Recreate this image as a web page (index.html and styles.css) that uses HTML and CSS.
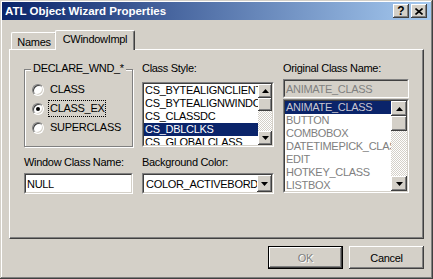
FILE: index.html
```html
<!DOCTYPE html>
<html lang="en">

<head>
   <meta charset="UTF-8">
   <title>ATL Object Wizard Properties</title>
   <link rel="stylesheet" href="styles.css">
</head>

<body>
   <div class="window">
      <div class="titlebar">
         <span class="title">ATL Object Wizard Properties</span>
         <div class="caption-buttons">
            <span class="cap-btn help">?</span>
            <span class="cap-btn">
               <svg width="8" height="7" viewBox="0 0 8 7"><path d="M0.5 0.5 L7.5 6.5 M7.5 0.5 L0.5 6.5" stroke="#000" stroke-width="1.6" fill="none"/></svg>
            </span>
         </div>
      </div>

      <div class="client">
         <div class="tabs">
            <div class="tab names">Names</div>
            <div class="tab active">CWindowImpl</div>
         </div>

         <div class="panel">
            <div class="grid">
               <!-- DECLARE_WND_* -->
               <div class="group">
                  <span class="group-label">DECLARE_WND_*</span>
                  <div class="radio-row">
                     <span class="radio"></span>
                     <span class="radio-text">CLASS</span>
                  </div>
                  <div class="radio-row">
                     <span class="radio checked"></span>
                     <span class="radio-text focus">CLASS_EX</span>
                  </div>
                  <div class="radio-row">
                     <span class="radio"></span>
                     <span class="radio-text">SUPERCLASS</span>
                  </div>
               </div>

               <!-- Class Style -->
               <div class="field">
                  <label class="lbl lbl-list">Class Style:</label>
                  <div class="listbox style-list">
                     <div class="listbox-inner">
                        <div class="items">
                           <div class="item">CS_BYTEALIGNCLIENT</div>
                           <div class="item">CS_BYTEALIGNWINDOW</div>
                           <div class="item">CS_CLASSDC</div>
                           <div class="item selected">CS_DBLCLKS</div>
                           <div class="item">CS_GLOBALCLASS</div>
                        </div>
                        <div class="scrollbar small">
                           <span class="sb-btn"><svg width="7" height="4" viewBox="0 0 7 4"><polygon points="0,4 3.5,0 7,4" fill="#000"/></svg></span>
                           <span class="thumb"></span>
                           <span class="sb-track"></span>
                           <span class="sb-btn"><svg width="7" height="4" viewBox="0 0 7 4"><polygon points="0,0 7,0 3.5,4" fill="#000"/></svg></span>
                        </div>
                     </div>
                  </div>
               </div>

               <!-- Original Class Name -->
               <div class="field original">
                  <label class="lbl">Original Class Name:</label>
                  <div class="edit disabled">
                     <div class="edit-inner">ANIMATE_CLASS</div>
                  </div>
                  <div class="listbox orig-list">
                     <div class="listbox-inner">
                        <div class="items grey">
                           <div class="item selected">ANIMATE_CLASS</div>
                           <div class="item">BUTTON</div>
                           <div class="item">COMBOBOX</div>
                           <div class="item">DATETIMEPICK_CLASS</div>
                           <div class="item">EDIT</div>
                           <div class="item">HOTKEY_CLASS</div>
                           <div class="item">LISTBOX</div>
                        </div>
                        <div class="scrollbar">
                           <span class="sb-btn"><svg width="7" height="4" viewBox="0 0 7 4"><polygon points="0,4 3.5,0 7,4" fill="#000"/></svg></span>
                           <span class="thumb"></span>
                           <span class="sb-track"></span>
                           <span class="sb-btn"><svg width="7" height="4" viewBox="0 0 7 4"><polygon points="0,0 7,0 3.5,4" fill="#000"/></svg></span>
                        </div>
                     </div>
                  </div>
               </div>

               <!-- Window Class Name -->
               <div class="field">
                  <label class="lbl">Window Class Name:</label>
                  <div class="edit">
                     <div class="edit-inner">NULL</div>
                  </div>
               </div>

               <!-- Background Color -->
               <div class="field">
                  <label class="lbl">Background Color:</label>
                  <div class="edit combo">
                     <div class="edit-inner">
                        <span class="combo-text">COLOR_ACTIVEBORDER</span>
                        <span class="combo-btn"><svg width="7" height="4" viewBox="0 0 7 4"><polygon points="0,0 7,0 3.5,4" fill="#000"/></svg></span>
                     </div>
                  </div>
               </div>
            </div>
         </div>

         <div class="actions">
            <button class="btn default" disabled>OK</button>
            <button class="btn">Cancel</button>
         </div>
      </div>
   </div>
</body>

</html>
```

FILE: styles.css
```css
* {
   box-sizing: border-box;
}

html,
body {
   margin: 0;
   padding: 0;
}

body {
   background: #d4d0c8;
   font-family: 'Liberation Sans', Arial, sans-serif;
   font-size: 11px;
   letter-spacing: -0.3px;
   color: #000;
}

.window {
   width: 433px;
   height: 279px;
   padding: 2px;
   background: #d4d0c8;
   box-shadow: inset -1px -1px #404040, inset 1px 1px #d4d0c8, inset -2px -2px #808080, inset 2px 2px #fff;
   display: flex;
   flex-direction: column;
}

/* title bar */
.titlebar {
   height: 18px;
   display: flex;
   align-items: center;
   justify-content: space-between;
   padding: 0 4px 0 3px;
   background: linear-gradient(to right, #0a246a, #a6caf0);
}

.title {
   color: #fff;
   font-weight: bold;
   font-size: 11.5px;
   letter-spacing: 0;
}

.caption-buttons {
   display: flex;
   gap: 2px;
}

.cap-btn {
   width: 16px;
   height: 14px;
   display: flex;
   align-items: center;
   justify-content: center;
   background: #d4d0c8;
   box-shadow: inset -1px -1px #404040, inset 1px 1px #fff, inset -2px -2px #808080;
}

.cap-btn.help {
   font-weight: bold;
   font-size: 12px;
   letter-spacing: 0;
   line-height: 14px;
}

/* client area */
.client {
   flex: 1;
   padding: 10px 7px 0;
   display: flex;
   flex-direction: column;
}

.tabs {
   display: flex;
   align-items: flex-end;
   height: 19px;
   padding-left: 2px;
}

.tab {
   height: 17px;
   display: flex;
   align-items: center;
   justify-content: center;
   background: #d4d0c8;
   border-top: 1px solid #fff;
   border-left: 1px solid #fff;
   border-right: 1px solid #404040;
   border-radius: 2px 2px 0 0;
   box-shadow: inset -1px 0 #808080;
}

.tab.names {
   width: 46px;
   padding-top: 1px;
}

.tab.active {
   position: relative;
   z-index: 1;
   width: 80px;
   height: 20px;
   margin-left: -2px;
   margin-bottom: -1px;
   padding-bottom: 3px;
}

.panel {
   height: 190px;
   border-top: 1px solid #fff;
   border-left: 1px solid #fff;
   border-right: 1px solid #404040;
   border-bottom: 1px solid #404040;
   box-shadow: inset -1px -1px #808080;
   padding: 12px 0 0 14px;
}

.grid {
   display: grid;
   grid-template-columns: 109px 132px 126px;
   grid-template-rows: 85px auto;
   column-gap: 9px;
   row-gap: 9px;
}

.lbl {
   display: block;
   line-height: 13px;
   height: 13px;
   white-space: nowrap;
}

.lbl-list {
   margin-bottom: 7px;
}

/* group box */
.group {
   position: relative;
   margin-top: 7px;
   height: 78px;
   border: 1px solid #808080;
   box-shadow: inset 1px 1px #fff, 1px 1px #fff;
   padding: 10px 0 0 7px;
}

.group-label {
   position: absolute;
   top: -8px;
   left: 6px;
   padding: 0 2px;
   line-height: 13px;
   background: #d4d0c8;
}

.radio-row {
   height: 19px;
   display: flex;
   align-items: center;
   gap: 4px;
}

.radio {
   width: 12px;
   height: 12px;
   border-radius: 50%;
   background: #fff;
   border: 1px solid;
   border-color: #808080 #fff #fff #808080;
   box-shadow: inset 1px 1px #404040, inset -1px -1px #d4d0c8;
   display: flex;
   align-items: center;
   justify-content: center;
}

.radio.checked::after {
   content: '';
   width: 4px;
   height: 4px;
   border-radius: 50%;
   background: #000;
}

.radio-text {
   line-height: 13px;
   padding: 1px 1px;
   border: 1px dotted transparent;
}

.radio-text.focus {
   border-color: #000;
}

/* sunken controls */
.listbox,
.edit {
   border: 1px solid;
   border-color: #808080 #fff #fff #808080;
}

.listbox-inner,
.edit-inner {
   height: 100%;
   border: 1px solid;
   border-color: #404040 #d4d0c8 #d4d0c8 #404040;
   background: #fff;
}

.listbox-inner {
   display: flex;
   overflow: hidden;
}

.style-list {
   height: 65px;
}

.orig-list {
   height: 94px;
   margin-top: 1px;
}

.items {
   flex: 1;
   min-width: 0;
   overflow: hidden;
}

.item {
   line-height: 13px;
   height: 13px;
   padding-left: 1px;
   white-space: nowrap;
   overflow: hidden;
}

.item.selected {
   background: #0a246a;
   color: #fff;
}

.items.grey .item {
   color: #808080;
}

.items.grey .item.selected {
   color: #c8c6d0;
}

.scrollbar {
   width: 16px;
   display: flex;
   flex-direction: column;
   background: repeating-conic-gradient(#fff 0 25%, #d4d0c8 0 50%) 0 0 / 2px 2px;
}

.scrollbar.small {
   width: 14px;
}

.sb-btn,
.thumb,
.combo-btn {
   display: flex;
   align-items: center;
   justify-content: center;
   background: #d4d0c8;
   box-shadow: inset -1px -1px #404040, inset 1px 1px #fff, inset -2px -2px #808080;
}

.sb-btn {
   height: 15px;
   flex-shrink: 0;
}

.scrollbar.small .sb-btn {
   height: 14px;
}

.thumb {
   height: 15px;
   flex-shrink: 0;
}

.scrollbar.small .thumb {
   height: 13px;
}

.sb-track {
   flex: 1;
}

/* edits */
.edit {
   height: 21px;
}

.edit-inner {
   display: flex;
   align-items: center;
   padding-left: 1px;
   white-space: nowrap;
   overflow: hidden;
}

.edit.disabled {
   height: 19px;
   margin-top: 6px;
}

.edit.disabled .edit-inner {
   background: #d4d0c8;
   color: #808080;
}

.field .lbl + .edit {
   margin-top: 4px;
}

.original {
   grid-row: 1 / 3;
   grid-column: 3;
}

.combo .edit-inner {
   padding-left: 2px;
}

.combo-text {
   flex: 1;
   min-width: 0;
   overflow: hidden;
}

.combo-btn {
   width: 15px;
   height: 100%;
   flex-shrink: 0;
}

/* dialog buttons */
.actions {
   display: flex;
   justify-content: flex-end;
   gap: 6px;
   margin-top: 7px;
}

.btn {
   width: 75px;
   height: 23px;
   font-family: 'Liberation Sans', Arial, sans-serif;
   font-size: 11px;
   letter-spacing: -0.3px;
   color: #000;
   background: #d4d0c8;
   border: none;
   padding: 0;
   box-shadow: inset -1px -1px #404040, inset 1px 1px #fff, inset -2px -2px #808080, inset 2px 2px #d4d0c8;
}

.btn.default {
   border: 1px solid #000;
}

.btn:disabled {
   color: #808080;
   text-shadow: 1px 1px #fff;
}
```
